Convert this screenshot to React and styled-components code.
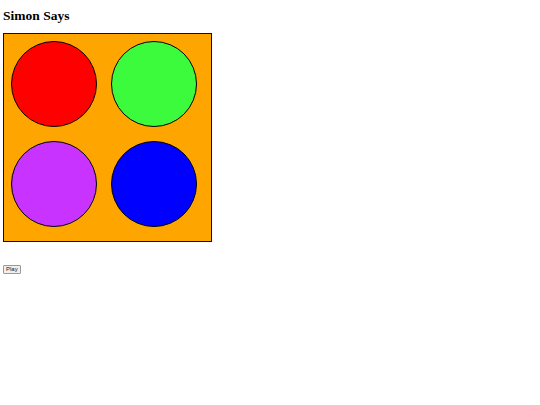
import styled, { createGlobalStyle } from "styled-components";

const GlobalStyle = createGlobalStyle`
  body {
    margin: 0;
    background: #fff;
    font-family: "Liberation Serif", "Times New Roman", serif;
  }
`;

const Page = styled.div`
  padding: 0 3px;
`;

const Title = styled.h2`
  margin: 8px 0 10px;
  font-size: 13.5px;
  font-weight: bold;
  line-height: 15px;
  color: #000;
`;

const Board = styled.div`
  display: grid;
  grid-template-columns: repeat(2, 86px);
  grid-auto-rows: 86px;
  gap: 14px;
  width: max-content;
  padding: 7px 14px 13.5px 6.5px;
  background: #ffa500;
  border: 1.5px solid #111;
`;

const Pad = styled.div`
  box-sizing: border-box;
  border-radius: 50%;
  border: 1.75px solid #000;
  background: ${(p) => p.color};
  cursor: pointer;
`;

const PlayButton = styled.button`
  display: block;
  margin-top: 23px;
  padding: 0 2px;
  height: 9px;
  font-family: "Liberation Sans", Arial, sans-serif;
  font-size: 6px;
  line-height: 7px;
  color: #222;
  background: #efefef;
  border: 1px solid #9a9a9a;
  border-radius: 1px;
`;

const pads = ["#ff0000", "#3cfb3c", "#c833ff", "#0000ff"];

export default function App() {
  return (
    <Page>
      <GlobalStyle />
      <Title>Simon Says</Title>
      <Board>
        {pads.map((c) => (
          <Pad key={c} color={c} />
        ))}
      </Board>
      <PlayButton>Play</PlayButton>
    </Page>
  );
}
